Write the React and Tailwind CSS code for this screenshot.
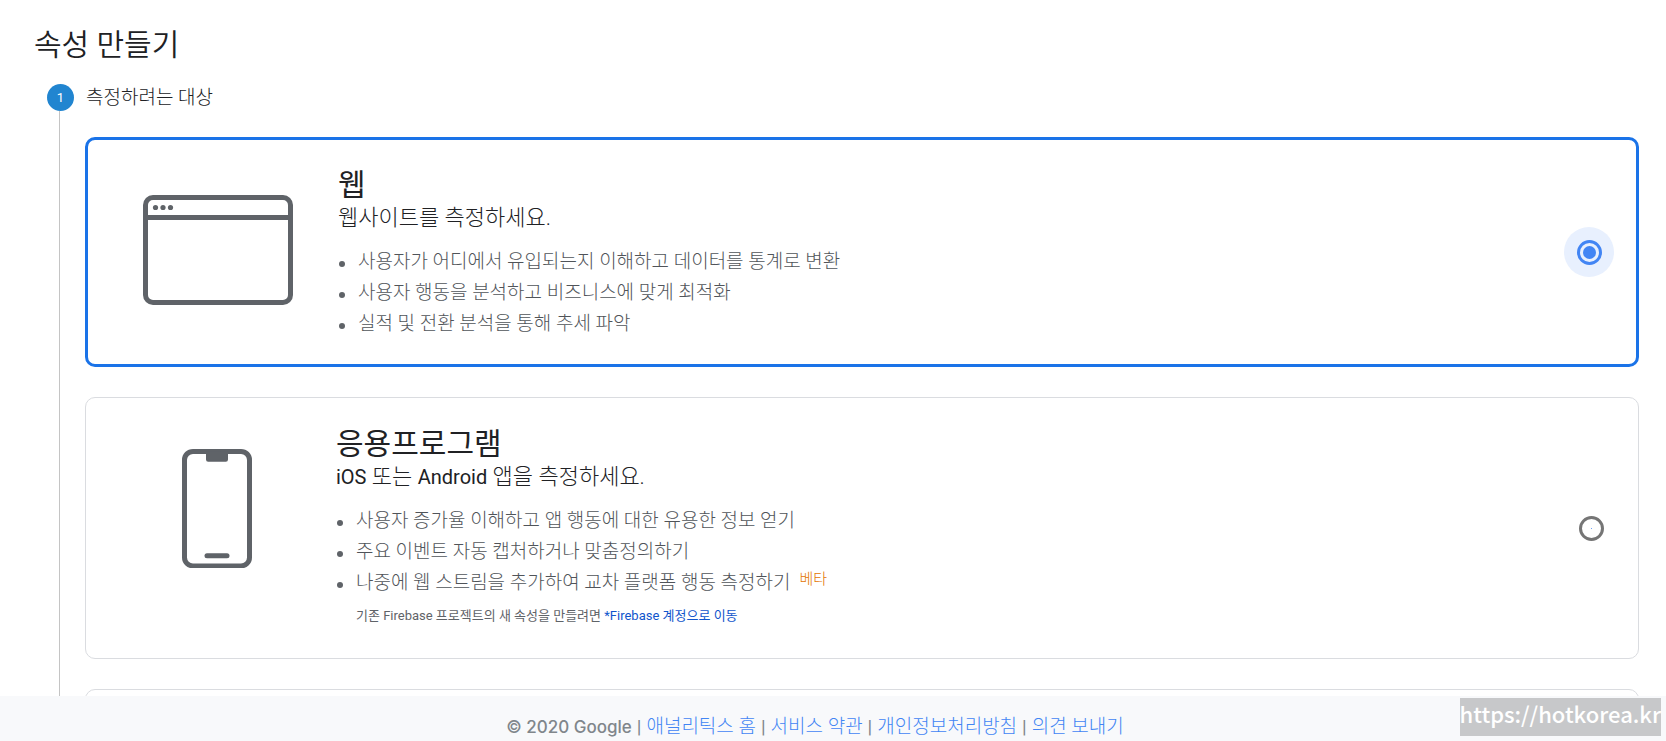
import { useState } from "react";

const cards = [
  {
    id: "web",
    title: "웹",
    subtitle: ["웹사이트를 측정하세요."],
    icon: WindowIcon,
    items: [
      { text: "사용자가 어디에서 유입되는지 이해하고 데이터를 통계로 변환" },
      { text: "사용자 행동을 분석하고 비즈니스에 맞게 최적화" },
      { text: "실적 및 전환 분석을 통해 추세 파악" },
    ],
  },
  {
    id: "app",
    title: "응용프로그램",
    subtitle: ["iOS", " 또는 ", "Android", " 앱을 측정하세요."],
    icon: PhoneIcon,
    items: [
      { text: "사용자 증가율 이해하고 앱 행동에 대한 유용한 정보 얻기" },
      { text: "주요 이벤트 자동 캡처하거나 맞춤정의하기" },
      { text: "나중에 웹 스트림을 추가하여 교차 플랫폼 행동 측정하기", badge: "베타" },
    ],
    note: { text: "기존 Firebase 프로젝트의 새 속성을 만들려면 ", link: "*Firebase 계정으로 이동" },
  },
];

const footerLinks = ["애널리틱스 홈", "서비스 약관", "개인정보처리방침", "의견 보내기"];

function WindowIcon() {
  return (
    <svg width="150" height="120" viewBox="0 0 150 120" fill="none" aria-hidden="true">
      <rect x="2.5" y="7.5" width="145" height="105" rx="7.5" stroke="#5f6368" strokeWidth="5" />
      <path d="M2.5 27.5h145" stroke="#5f6368" strokeWidth="5" />
      <g fill="#5f6368">
        <circle cx="12.5" cy="17.5" r="2.6" />
        <circle cx="20" cy="17.5" r="2.6" />
        <circle cx="27.5" cy="17.5" r="2.6" />
      </g>
    </svg>
  );
}

function PhoneIcon() {
  return (
    <svg width="150" height="120" viewBox="0 0 150 120" fill="none" aria-hidden="true">
      <rect x="43.5" y="3.4" width="65" height="114.5" rx="8.5" stroke="#5f6368" strokeWidth="5" />
      <path d="M65 3.5h22v8a2.2 2.2 0 0 1-2.2 2.2H67.2a2.2 2.2 0 0 1-2.2-2.2z" fill="#5f6368" />
      <rect x="63.5" y="105.3" width="25" height="5" rx="2.5" fill="#5f6368" />
    </svg>
  );
}

function OptionCard({ card, selected, onSelect }) {
  const Icon = card.icon;
  return (
    <section
      className={
        "flex rounded-[10px] bg-white pr-[22px] " +
        (selected ? "border-3 border-[#1a73e8]" : "border border-[#dadce0]")
      }
    >
      <div className="mr-[45px] ml-[55px] shrink-0 pt-[50px]">
        <Icon />
      </div>
      <div className={"min-w-0 flex-1 " + (selected ? "pt-[26px] pb-[25px]" : "pt-[27px] pb-[24px]")}>
        <h2 className="text-[30px] leading-[38px] text-[#202124]">
          <label htmlFor={card.id}>{card.title}</label>
        </h2>
        <p className="text-[22px] leading-[28px] font-light text-[#202124]">
          {card.subtitle.map((part) =>
            /^[A-Za-z]+$/.test(part) ? (
              <span key={part} className="text-[20px] font-normal">
                {part}
              </span>
            ) : (
              part
            )
          )}
        </p>
        <ul className="mt-[14px] text-[19px] leading-[31px] font-light text-[#505459]">
          {card.items.map((item) => (
            <li key={item.text} className="flex items-center gap-[13px] pl-px">
              <span className="mt-[4px] size-[6px] shrink-0 rounded-full bg-[#5f6368]" />
              <span>{item.text}</span>
              {item.badge && (
                <span className="-ml-[4px] pb-[8px] text-[15px] leading-[20px] text-[#e37400]">{item.badge}</span>
              )}
            </li>
          ))}
        </ul>
        {card.note && (
          <p className="pt-[8px] pb-[8px] pl-[20px] text-[13px] leading-[20px] text-[#5f6368]">
            {card.note.text}
            <a href="#firebase" className="text-[#1155cc]">
              {card.note.link}
            </a>
          </p>
        )}
      </div>
      <div
        className={
          "flex size-[50px] shrink-0 items-center justify-center self-center rounded-full " +
          (selected ? "bg-[#e8f0fe]" : "")
        }
      >
        <input
          type="radio"
          id={card.id}
          name="target"
          checked={selected}
          onChange={onSelect}
          className="flex size-[25px] appearance-none items-center justify-center rounded-full border-3 border-[#757575] before:size-px before:rounded-full before:bg-[#4285f4] checked:border-[#4285f4] checked:before:size-[13px]"
        />
      </div>
    </section>
  );
}

export default function App() {
  const [target, setTarget] = useState("web");
  return (
    <div className="relative flex h-screen flex-col overflow-hidden bg-white font-[Roboto,'Noto_Sans_CJK_KR',sans-serif]">
      <main className="min-h-0 flex-1 overflow-hidden pr-[27px] pl-[34px]">
        <h1 className="pt-[24px] text-[30px] leading-[42px] font-[350] text-[#202124]">속성 만들기</h1>
        <div className="mt-[18px] ml-[13px] flex items-center gap-[12px]">
          <span className="flex size-[27px] items-center justify-center rounded-full bg-[#2185d0] text-[13px] text-white">
            1
          </span>
          <h2 className="text-[19px] leading-[27px] font-light text-[#202124]">측정하려는 대상</h2>
        </div>
        <div className="ml-[25px] flex flex-col gap-[30px] border-l border-[#c4c4c4] pt-[26px] pl-[25px]">
          {cards.map((card) => (
            <OptionCard
              key={card.id}
              card={card}
              selected={target === card.id}
              onSelect={() => setTarget(card.id)}
            />
          ))}
          <div className="h-[200px] rounded-[10px] border border-[#dadce0]" />
        </div>
      </main>
      <footer className="flex h-[45px] shrink-0 items-center justify-center bg-[#f8f9fb] pt-[16px] pr-[36px] text-[19px] leading-[28px] text-[#80868b]">
        <span className="font-[Inter,sans-serif] text-[17px] font-medium">© 2020 Google</span>
        {footerLinks.map((link) => (
          <span key={link} className="flex">
            <span className="px-[5px]">|</span>
            <a href="#footer" className="font-light text-[#4285f4]">
              {link}
            </a>
          </span>
        ))}
      </footer>
      <div className="absolute right-[5px] bottom-[5px] h-[38px] bg-[#c7c8ca] font-['Noto_Sans_CJK_KR',sans-serif] text-[22px] leading-[30px] font-medium text-white">
        https://hotkorea.kr
      </div>
    </div>
  );
}
